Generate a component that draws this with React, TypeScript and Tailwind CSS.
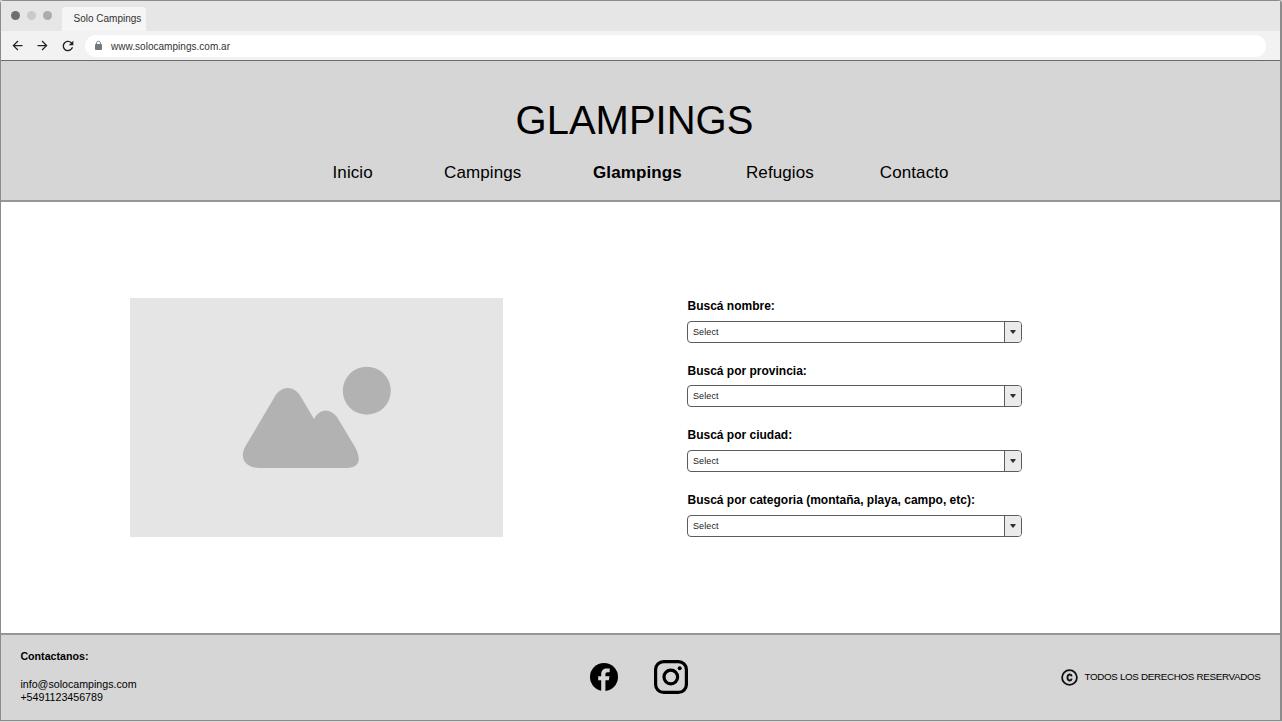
import React from 'react';
import { MdArrowBack, MdArrowForward, MdRefresh } from 'react-icons/md';

const searchFields = [
  'Buscá nombre:',
  'Buscá por provincia:',
  'Buscá por ciudad:',
  'Buscá por categoria (montaña, playa, campo, etc):',
];

function BrowserBar() {
  return (
    <div className="h-[60px] shrink-0 border-b border-[#6b6b6b] bg-[#f2f2f2]">
      <div className="flex h-[30px] items-start bg-[#e6e6e6] pl-[10px]">
        <div className="flex gap-[7px] pt-[10px]">
          <span className="size-[9px] rounded-full bg-[#6f6f6f]" />
          <span className="size-[9px] rounded-full bg-[#cacaca]" />
          <span className="size-[9px] rounded-full bg-[#ababab]" />
        </div>
        <div className="mt-[6px] ml-[10px] flex h-[24px] w-[84px] items-start rounded-t-[3px] bg-[#f5f5f5] pt-[4px] pl-[11.5px] text-[10px] leading-[15px] whitespace-nowrap text-[#333]">
          Solo Campings
        </div>
      </div>
      <div className="flex h-[29px] items-center pr-[14px] pl-[8.5px] text-[#222]">
        <MdArrowBack className="size-[15px]" />
        <MdArrowForward className="ml-[10px] size-[15px]" />
        <MdRefresh className="ml-[10.5px] size-[16px]" />
        <div className="ml-[9px] flex h-[22px] flex-1 items-center rounded-full bg-white pl-[9px] text-[10px] text-[#333]">
          <svg viewBox="0 0 9 11" className="mr-[8px] h-[11px] w-[9px]">
            <rect x="1" y="4" width="7" height="6" rx="0.8" fill="#777" />
            <path d="M2.6 4.5V3C2.6 0.6 6.4 0.6 6.4 3V4.5" fill="none" stroke="#777" strokeWidth="1" />
          </svg>
          <span className="pt-[2px] tracking-[0.03px]">www.solocampings.com.ar</span>
        </div>
      </div>
    </div>
  );
}

function Header() {
  return (
    <header className="h-[141px] shrink-0 border-b-2 border-[#969696] bg-[#d6d6d6] text-black">
      <h1 className="pt-[36px] pr-[12px] text-center text-[40px] leading-[46px]">GLAMPINGS</h1>
      <nav className="flex pt-[20px] pl-[331.5px] text-[17px] leading-[20px] tracking-[0.1px]">
        <a className="w-[111.6px]">Inicio</a>
        <a className="w-[148.9px]">Campings</a>
        <a className="w-[153px] font-bold">Glampings</a>
        <a className="w-[133.8px]">Refugios</a>
        <a>Contacto</a>
      </nav>
    </header>
  );
}

function ImagePlaceholder() {
  return (
    <div className="h-[239px] w-[373px] bg-[#e5e5e5]">
      <svg viewBox="0 0 373 239" className="size-full" fill="#b2b2b2">
        <circle cx="236.8" cy="92.7" r="24" />
        <path d="M115 149 L144 100 C151 87 164 87 171 99 L184 121 C190 110 200 110 207 119 L225 149 C232 162 229 170 217 170 H130 C116 170 109 161 115 149 Z" />
      </svg>
    </div>
  );
}

function SelectField({ label }: { label: string }) {
  return (
    <div className="h-[64.7px]">
      <div className="pl-[0.5px] text-[12px] leading-[15px] font-bold">{label}</div>
      <div className="mt-[6.7px] flex h-[22px] w-[335px] overflow-hidden rounded-[4px] border border-[#5c5c5c] bg-white">
        <div className="flex-1 pl-[5px] text-[9px] leading-[20px] tracking-[0.1px] text-[#222]">Select</div>
        <div className="flex w-[17px] items-center justify-center border-l border-[#5c5c5c] bg-[#ebebeb]">
          <svg viewBox="0 0 6 4" className="h-[4px] w-[6px]" fill="#333">
            <path d="M0.6 0H5.4Q6 0.3 5.5 1L3.5 3.4Q3 4 2.5 3.4L0.5 1Q0 0.3 0.6 0Z" />
          </svg>
        </div>
      </div>
    </div>
  );
}

function Footer() {
  return (
    <footer className="flex h-[87px] shrink-0 border-t-2 border-[#969696] bg-[#d6d6d6] pl-[19.4px] text-black">
      <div className="w-[569.6px] pt-[15px] text-[10.66px] leading-[13px]">
        <div className="font-bold">Contactanos:</div>
        <div className="mt-[15px]">info@solocampings.com</div>
        <div>+5491123456789</div>
      </div>
      <svg viewBox="0 0 28 28" className="mt-[28px] size-[28px]">
        <circle cx="14" cy="14" r="14" fill="#000" />
        <path d="M11.2 28V17.3H8.2V13.3H11.2V11.5C11.2 7.4 13.5 5.5 16.8 5.5H19.7V9.3H17.6C16 9.3 15.4 10 15.4 11.3V13.3H19.5L18.8 17.3H15.4V28Z" fill="#d6d6d6" />
      </svg>
      <svg viewBox="0 0 34 34" className="mt-[25px] ml-[36px] size-[34px]" fill="none" stroke="#000">
        <rect x="1.6" y="1.6" width="30.8" height="30.8" rx="8" strokeWidth="3.2" />
        <circle cx="16.8" cy="17" r="6.8" strokeWidth="3.2" />
        <circle cx="25.7" cy="8.3" r="2" fill="#000" stroke="none" />
      </svg>
      <div className="mt-[34px] ml-auto flex h-[17px] items-center pr-[19.5px] text-[9.8px] tracking-[-0.31px] whitespace-nowrap">
        <svg viewBox="0 0 17 17" className="mr-[6.5px] size-[17px]" fill="none" stroke="#111">
          <circle cx="8.5" cy="8.5" r="7.4" strokeWidth="1.8" />
          <path d="M10.7 7.3C10.3 4.8 6.5 4.6 6.5 8.5S10.3 12.2 10.7 9.7" strokeWidth="1.9" />
        </svg>
        TODOS LOS DERECHOS RESERVADOS
      </div>
    </footer>
  );
}

export default function App() {
  return (
    <div className="h-[722px] w-[1282px] overflow-hidden bg-[#d6d6d6] font-['Liberation_Sans',Arial,sans-serif]">
      <div className="flex h-[721px] w-[1282px] flex-col rounded-t-[4px] border border-r-2 border-[#8c8c8c] bg-white">
        <BrowserBar />
        <Header />
        <main className="flex flex-1 pt-[96px] pl-[129px] text-black">
          <ImagePlaceholder />
          <section className="ml-[184px] pt-[1px]">
            {searchFields.map((label) => (
              <SelectField key={label} label={label} />
            ))}
          </section>
        </main>
        <Footer />
      </div>
    </div>
  );
}
